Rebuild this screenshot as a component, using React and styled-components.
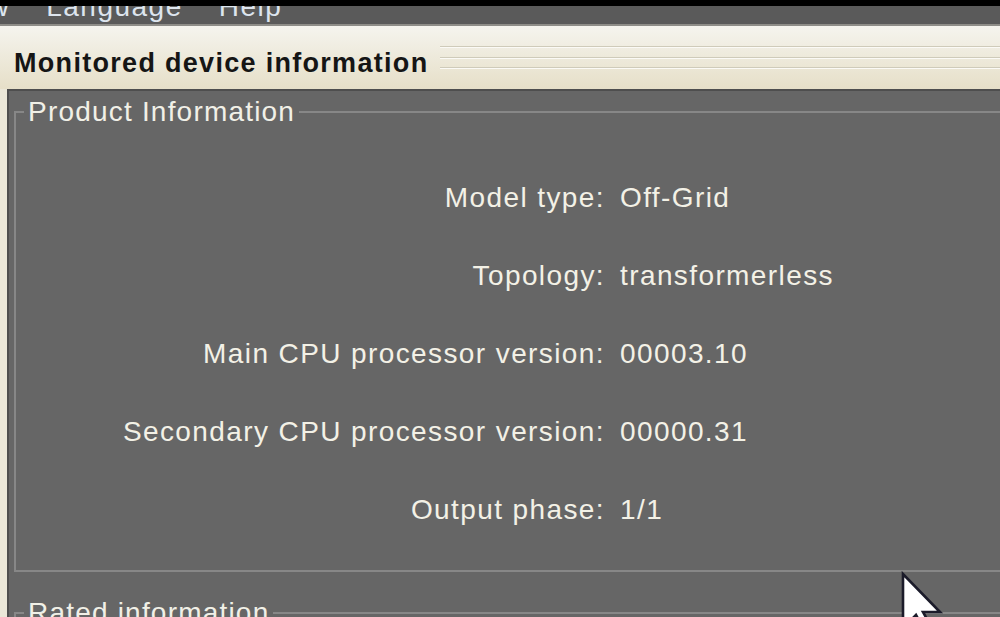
import React from "react";
import styled, { createGlobalStyle } from "styled-components";

const Global = createGlobalStyle`
  html, body {
    margin: 0;
    padding: 0;
    background: #000;
    overflow: hidden;
    font-family: "Liberation Sans", Arial, sans-serif;
  }
`;

const Screen = styled.div`
  position: relative;
  width: 1000px;
  height: 617px;
  display: flex;
  flex-direction: column;
  overflow: hidden;
  background: #000;
`;

const TopEdge = styled.div`
  height: 6px;
  flex: none;
  background: #000;
`;

const MenuBar = styled.div`
  flex: none;
  height: 18px;
  display: flex;
  align-items: flex-start;
  overflow: hidden;
  background: #5a5a5a;
  border-bottom: 2px solid #8e8d88;
`;

const MenuItem = styled.span`
  font-size: 28px;
  line-height: 18px;
  margin-top: -8px;
  margin-left: ${(p) => (p.$first ? "-56px" : "0")};
  margin-right: 36px;
  color: #dde5ee;
  letter-spacing: 1.5px;
  white-space: nowrap;
`;

const Header = styled.div`
  flex: none;
  box-sizing: border-box;
  height: 63px;
  display: flex;
  align-items: flex-start;
  padding: 22px 0 0 14px;
  background: linear-gradient(#f5f4ee, #e6dfc8);
`;

const Title = styled.h1`
  margin: 0;
  font-size: 27px;
  line-height: 30px;
  font-weight: bold;
  color: #151515;
  letter-spacing: 1.3px;
  white-space: nowrap;
`;

const Stripes = styled.div`
  flex: 1;
  height: 34px;
  margin: -4px 0 0 12px;
  background: repeating-linear-gradient(
    to bottom,
    transparent 0 2px,
    #cfcbba 2px 3px,
    #fbfaf6 3px 4px,
    transparent 4px 10.5px
  );
`;

const Body = styled.div`
  flex: 1;
  display: flex;
  padding-left: 7px;
  background: #ebe7d8;
  min-height: 0;
`;

const Panel = styled.div`
  flex: 1;
  background: #666666;
  border-left: 2px solid #4e4e4e;
  border-top: 2px solid #4e4e4e;
  padding: 7px 0 0 5px;
  overflow: hidden;
`;

const Group = styled.fieldset`
  margin: ${(p) => (p.$spaced ? "27px" : "0")} -30px 0 0;
  padding: 0 0 21px 0;
  border: 2px solid #878787;
  min-width: 0;
`;

const Legend = styled.legend`
  margin-left: 8px;
  padding: 0 4px;
  font-size: 28px;
  line-height: 28px;
  color: #f1f0e7;
  letter-spacing: 1.2px;
  white-space: nowrap;
`;

const InfoGrid = styled.div`
  display: grid;
  grid-template-columns: 589px 1fr;
  column-gap: 15px;
  padding-top: 33px;
`;

const Label = styled.div`
  text-align: right;
  font-size: 28px;
  line-height: 78px;
  color: #f3f1e6;
  letter-spacing: 1.4px;
  white-space: nowrap;
`;

const Value = styled(Label)`
  text-align: left;
`;

const Cursor = styled.svg`
  position: absolute;
  left: 900px;
  top: 571px;
  width: 44px;
  height: 64px;
  pointer-events: none;
`;

const rows = [
  ["Model type:", "Off-Grid"],
  ["Topology:", "transformerless"],
  ["Main CPU processor version:", "00003.10"],
  ["Secondary CPU processor version:", "00000.31"],
  ["Output phase:", "1/1"],
];

export default function App() {
  return (
    <>
      <Global />
      <Screen>
        <TopEdge />
        <MenuBar>
          <MenuItem $first>View</MenuItem>
          <MenuItem>Language</MenuItem>
          <MenuItem>Help</MenuItem>
        </MenuBar>
        <Header>
          <Title>Monitored device information</Title>
          <Stripes />
        </Header>
        <Body>
          <Panel>
            <Group>
              <Legend>Product Information</Legend>
              <InfoGrid>
                {rows.map(([label, value]) => (
                  <React.Fragment key={label}>
                    <Label>{label}</Label>
                    <Value>{value}</Value>
                  </React.Fragment>
                ))}
              </InfoGrid>
            </Group>
            <Group $spaced>
              <Legend>Rated information</Legend>
              <InfoGrid />
            </Group>
          </Panel>
        </Body>
        <Cursor viewBox="0 0 44 64">
          <path
            d="M3 3 L3 57 L16 44 L26 62 L33 59 L23 41 L40 41 Z"
            fill="#ffffff"
            stroke="#1b1b2a"
            strokeWidth="2.6"
            strokeLinejoin="miter"
          />
        </Cursor>
      </Screen>
    </>
  );
}
